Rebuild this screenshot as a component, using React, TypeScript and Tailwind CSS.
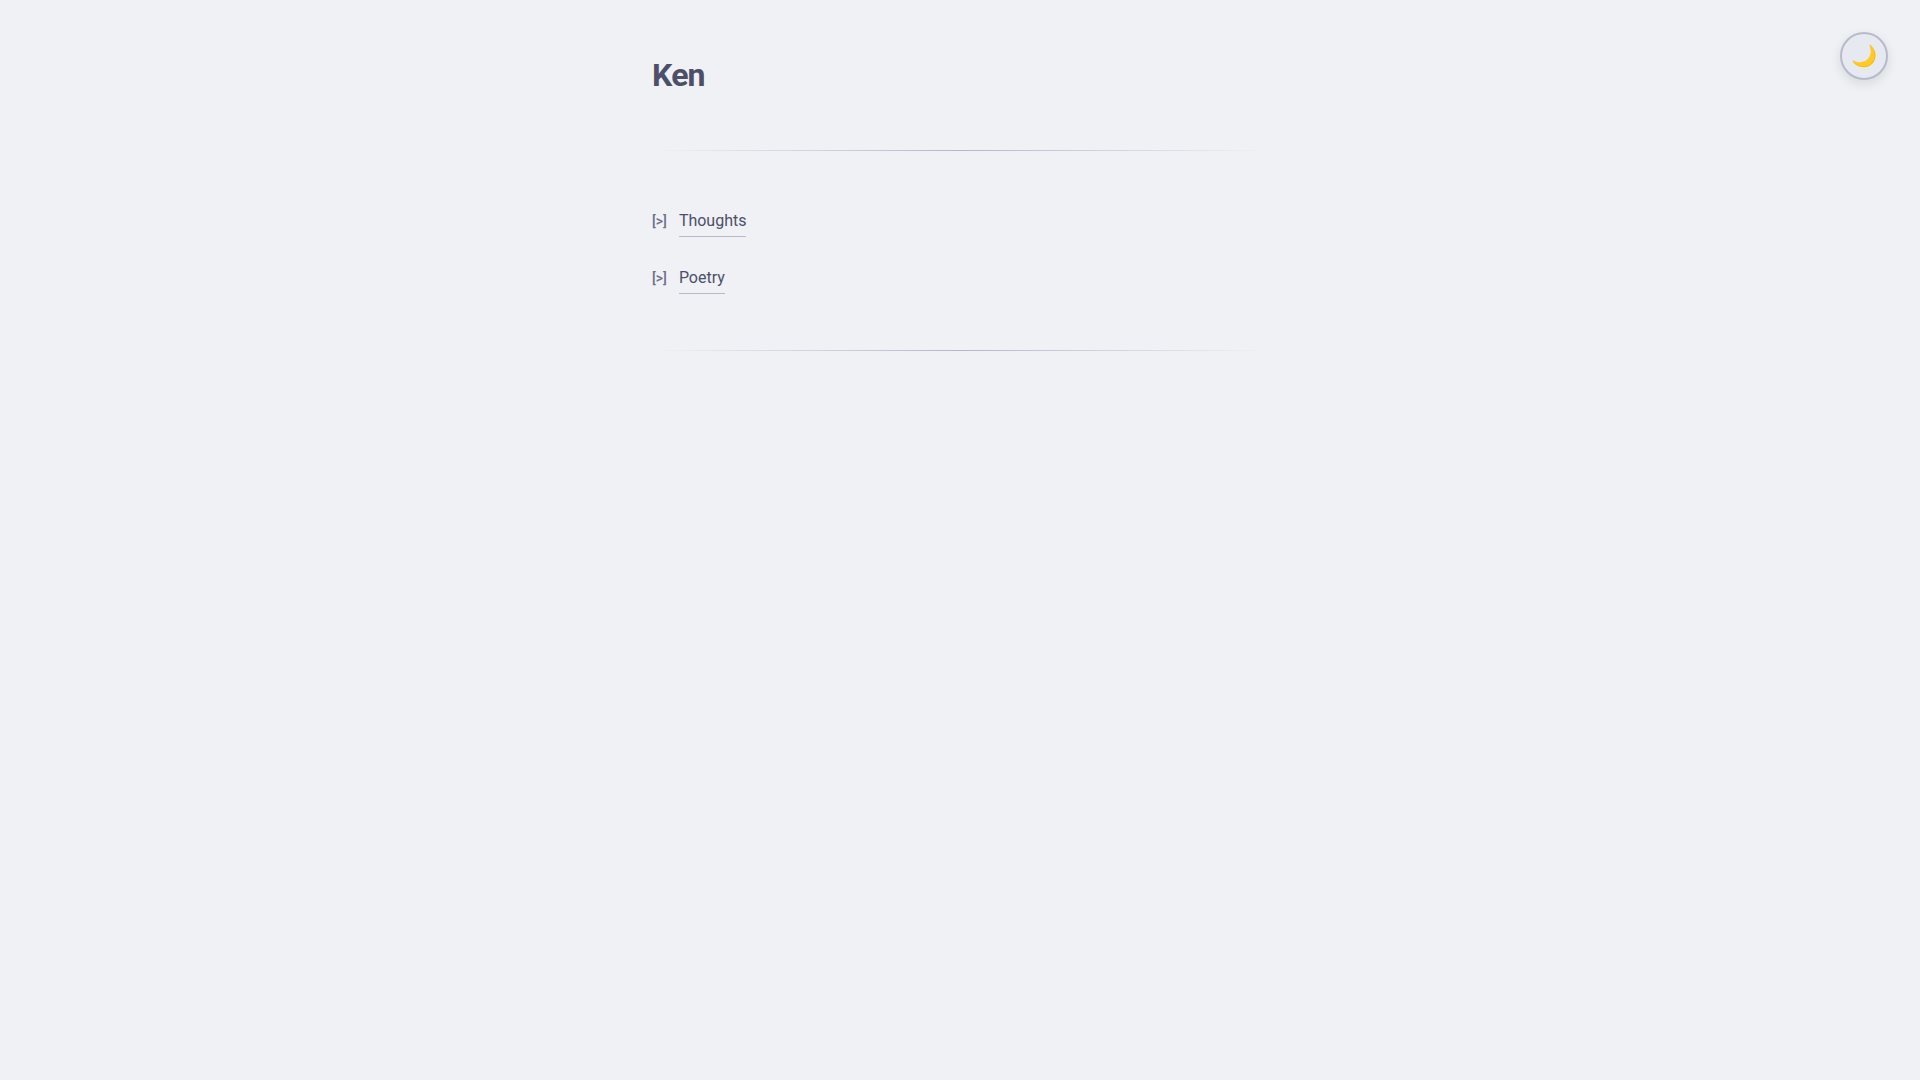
const links = [
  { label: "Thoughts", href: "#thoughts" },
  { label: "Poetry", href: "#poetry" },
];

function Divider() {
  return <hr className="h-px border-0 bg-[linear-gradient(to_right,transparent,#b4b7cb,transparent)]" />;
}

export default function App() {
  return (
    <div className="min-h-screen bg-[#eff1f5] font-['Roboto',sans-serif] text-[#4c4f69]">
      <button
        type="button"
        aria-label="Toggle dark mode"
        className="fixed top-8 right-8 flex size-12 items-center justify-center rounded-full border-2 border-[#b7bacb] bg-[#e6e9ef] text-[21px] leading-[34px] shadow-[0_4px_12px_rgba(0,0,0,0.1)]"
      >
        🌙
      </button>
      <main className="mx-auto max-w-[656px] px-5 py-12">
        <h1 className="text-[32px] leading-[54px] font-bold tracking-tight">Ken</h1>
        <div className="pt-12">
          <Divider />
        </div>
        <ul className="space-y-7 pt-[57px] pb-14">
          {links.map((link) => (
            <li key={link.label} className="flex items-baseline gap-3">
              <span className="text-sm font-medium text-[#6c6f85]">[&gt;]</span>
              <a href={link.href} className="border-b border-[#b7bacb] pb-0.5 leading-[26px]">
                {link.label}
              </a>
            </li>
          ))}
        </ul>
        <Divider />
      </main>
    </div>
  );
}
